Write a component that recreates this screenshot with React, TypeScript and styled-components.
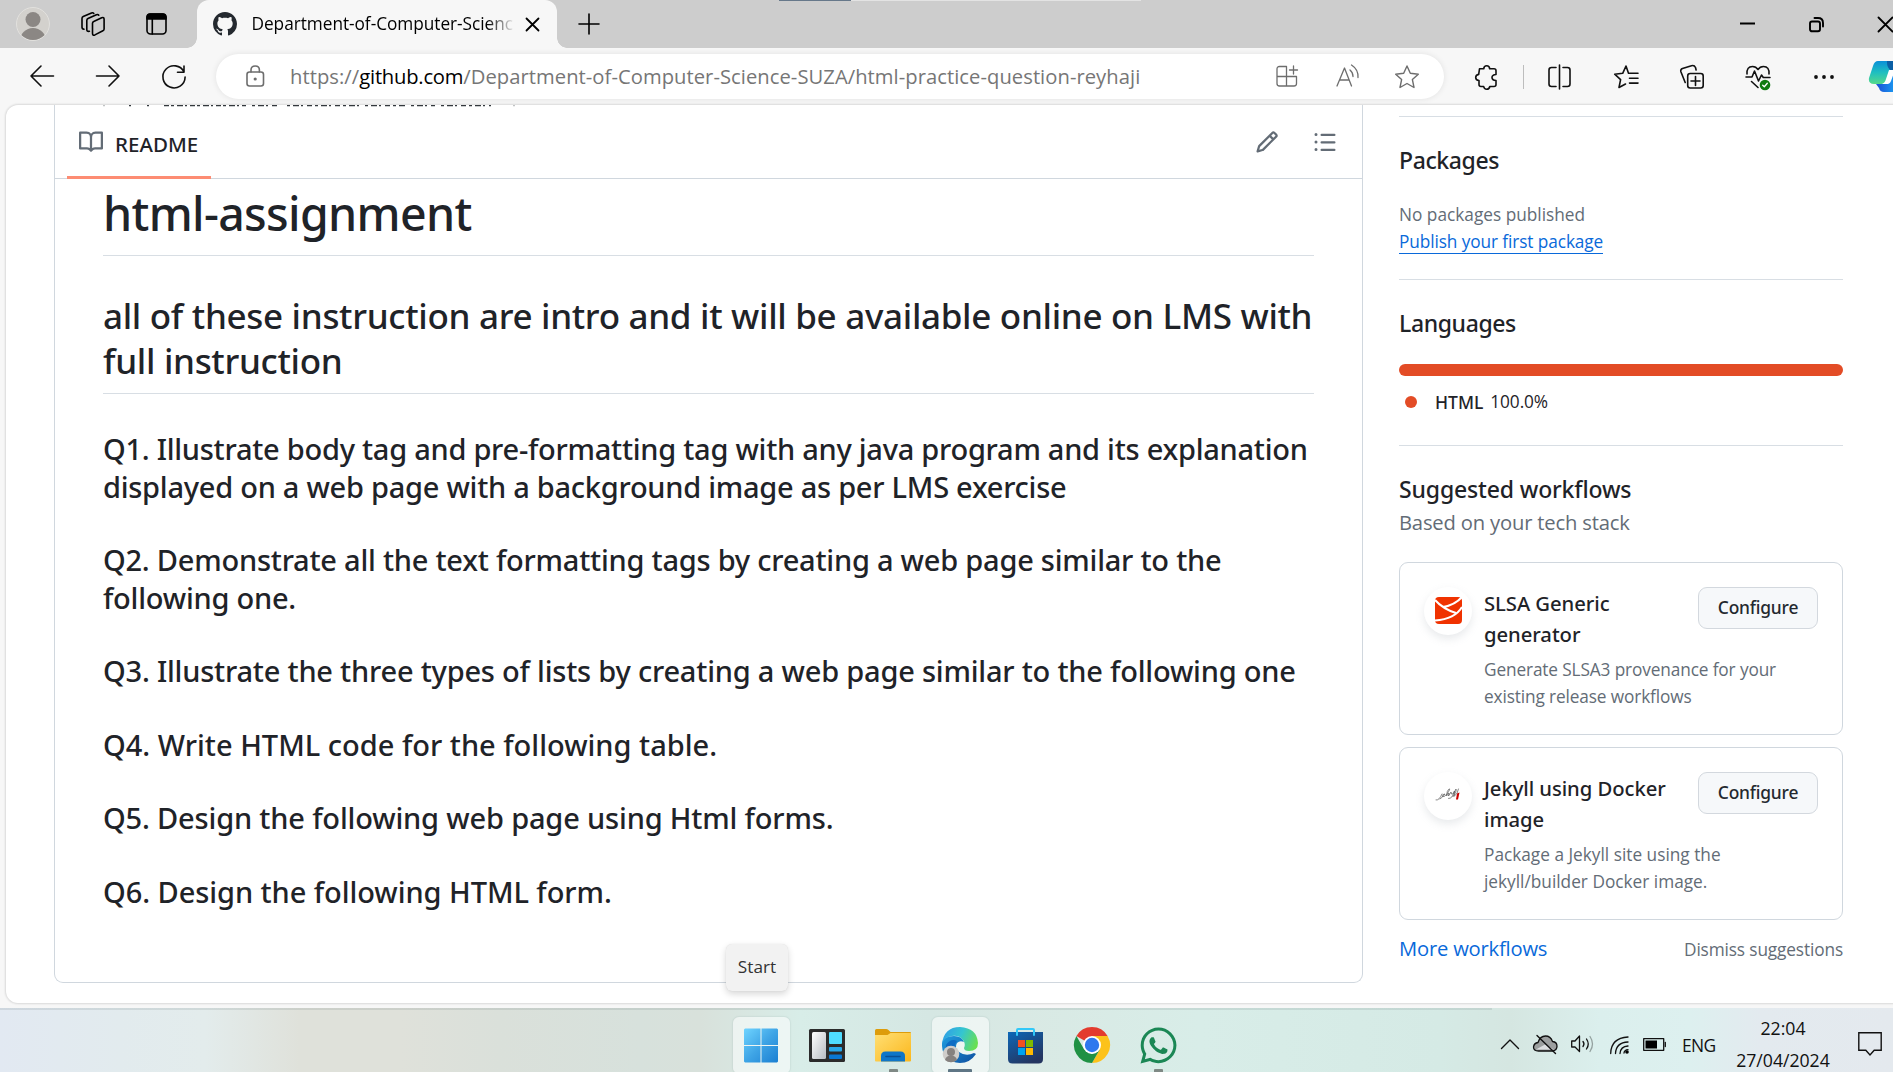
import React from 'react';
import styled, { createGlobalStyle } from 'styled-components';
import { FaWhatsapp } from 'react-icons/fa';

const Global = createGlobalStyle`
  * { box-sizing: border-box; }
  body { margin: 0; overflow: hidden; background: #f7f7f7; }
`;

const regular = '"Open Sans", "Noto Sans", sans-serif';
const semibold = '"Noto Sans", "Open Sans", sans-serif';

const Screen = styled.div`
  position: relative;
  display: flex;
  flex-direction: column;
  width: 1893px;
  height: 1072px;
  overflow: hidden;
  background: #f7f7f7;
  font-family: ${regular};
  color: #1f2328;
  white-space: nowrap;
`;

const Icon = styled.svg<{ $ml?: number; $mt?: number; $sw?: number }>`
  display: block;
  flex: none;
  overflow: visible;
  fill: none;
  stroke: currentColor;
  stroke-width: ${p => p.$sw ?? 1.6};
  stroke-linecap: round;
  stroke-linejoin: round;
  margin-left: ${p => p.$ml ?? 0}px;
  margin-top: ${p => p.$mt ?? 0}px;
`;

const Octicon = styled(Icon)`
  fill: #636c76;
  stroke: none;
`;

/* ---------- tab strip ---------- */

const TabStrip = styled.header`
  display: flex;
  flex: none;
  align-items: center;
  height: 48px;
  padding-left: 16px;
  background: #cdcdcd;
  color: #000;
`;

const CaptureBar = styled.div`
  position: absolute;
  top: 0;
  left: 779px;
  width: 362px;
  height: 1px;
  background: linear-gradient(90deg, #66788a 72px, #e3e3e3 72px);
`;

const Tab = styled.div`
  position: relative;
  display: flex;
  flex: none;
  align-items: center;
  align-self: stretch;
  width: 360px;
  margin-left: 30px;
  padding: 0 17px 0 16px;
  background: #f7f7f7;
  border-radius: 12px 12px 0 0;
  &::before, &::after {
    content: '';
    position: absolute;
    bottom: 0;
    width: 10px;
    height: 10px;
  }
  &::before { left: -10px; background: radial-gradient(circle at 0 0, transparent 9.5px, #f7f7f7 10px); }
  &::after { right: -10px; background: radial-gradient(circle at 100% 0, transparent 9.5px, #f7f7f7 10px); }
`;

const TabTitle = styled.span`
  flex: none;
  width: 264px;
  margin-left: 15px;
  font-size: 17.25px;
  line-height: 32px;
  letter-spacing: -0.04px;
  mask-image: linear-gradient(90deg, #000 235px, transparent 263px);
`;

/* ---------- toolbar ---------- */

const Toolbar = styled.div`
  display: flex;
  flex: none;
  align-items: center;
  height: 57px;
  padding-left: 30px;
  color: #111;
`;

const AddressBar = styled.div`
  display: flex;
  flex: none;
  align-items: center;
  width: 1228px;
  height: 45px;
  margin-left: 30px;
  padding-left: 30px;
  border-radius: 23px;
  background: #fff;
  box-shadow: 0 0 6px rgba(0, 0, 0, 0.09);
  color: #6d6d6d;
`;

const Url = styled.span`
  width: 986px;
  margin-left: 26px;
  font-size: 20.2px;
  line-height: 45px;
  letter-spacing: 0.05px;
  color: #767676;
  b { font-weight: 400; color: #000; letter-spacing: -0.22px; }
`;

const Divider = styled.span`
  flex: none;
  width: 1px;
  height: 24px;
  margin-left: 24px;
  background: #bdbdbd;
`;

/* ---------- page ---------- */

const Page = styled.main`
  display: flex;
  flex: none;
  align-items: flex-start;
  width: 1892px;
  height: 898px;
  margin-left: 6px;
  padding-left: 48px;
  overflow: hidden;
  background: #fff;
  border-radius: 12px 0 0 12px;
  box-shadow: 0 0 2px 1px rgba(0, 0, 0, 0.12);
`;

const Readme = styled.section`
  flex: none;
  width: 1309px;
  height: 878px;
  border: 1px solid #d0d7de;
  border-top: 0;
  border-radius: 0 0 9px 9px;
`;

const ReadmeHeader = styled.div`
  position: relative;
  display: flex;
  height: 74px;
  padding: 0 25px 0 12px;
  border-bottom: 1px solid #d0d7de;
`;

const ScrolledLine = styled.svg`
  position: absolute;
  top: 0;
  left: 0;
  stroke: #33383d;
  stroke-width: 1.4;
  fill: none;
`;

const ReadmeTab = styled.div`
  display: flex;
  width: 144px;
  height: 74px;
  padding-left: 12px;
  border-bottom: 3px solid #fd8c73;
  span {
    margin-left: 12px;
    padding-top: 24px;
    font: 500 20.5px/30px ${semibold};
    letter-spacing: 0.05px;
  }
`;

const HeaderTools = styled.div`
  display: flex;
  align-items: flex-start;
  gap: 34px;
  margin-left: auto;
  padding-top: 25px;
`;

const Article = styled.article`
  padding: 4px 48px 0;
  font-family: ${semibold};
  font-weight: 500;
`;

const H1 = styled.h1`
  margin: 0 0 37px;
  padding-bottom: 12px;
  border-bottom: 1px solid #d8dee4;
  font-size: 46.5px;
  font-weight: 500;
  line-height: 60px;
  letter-spacing: -0.66px;
`;

const H2 = styled.h2`
  margin: 0 0 36px;
  padding-bottom: 10px;
  border-bottom: 1px solid #d8dee4;
  font-size: 35px;
  font-weight: 500;
  line-height: 45px;
  letter-spacing: -0.31px;
`;

const H3 = styled.h3<{ $ls?: number }>`
  margin: 0 0 36px;
  font-size: 29px;
  font-weight: 500;
  line-height: 37.5px;
  letter-spacing: ${p => p.$ls ?? -0.26}px;
`;

/* ---------- sidebar ---------- */

const Sidebar = styled.aside`
  width: 444px;
  margin-left: 36px;
  padding-top: 11px;
`;

const Section = styled.section<{ $h?: number }>`
  height: ${p => (p.$h ? p.$h + 'px' : 'auto')};
  padding-top: 24px;
  border-top: 1px solid #d8dee4;
`;

const SideTitle = styled.h2<{ $ls?: number }>`
  margin: 0;
  font: 500 23px/38px ${semibold};
  letter-spacing: ${p => p.$ls ?? -0.38}px;
`;

const Muted = styled.p<{ $size?: number; $lh?: number; $ls?: number }>`
  margin: 0;
  color: #636c76;
  font-size: ${p => p.$size ?? 17.25}px;
  line-height: ${p => p.$lh ?? 27}px;
  letter-spacing: ${p => p.$ls ?? 0}px;
`;

const PackageText = styled.div`
  padding-top: 22px;
`;

const PackageLink = styled.a`
  display: inline-block;
  height: 26px;
  border-bottom: 1px solid #0969da;
  color: #0969da;
  font-size: 17.25px;
  line-height: 27px;
  letter-spacing: -0.1px;
`;

const LanguageBar = styled.div`
  height: 12px;
  margin-top: 22px;
  border-radius: 6px;
  background: #e34c26;
`;

const LanguageRow = styled.div`
  display: flex;
  align-items: center;
  height: 27px;
  margin-top: 12px;
  padding-left: 6px;
  font-size: 17.25px;
  i { width: 12px; height: 12px; border-radius: 50%; background: #e34c26; }
  b { margin-left: 18px; font: 500 17.5px ${semibold}; }
  span { margin-left: 7px; letter-spacing: -0.1px; }
`;

const Workflows = styled.div`
  padding-top: 25px;
`;

const Card = styled.div`
  display: flex;
  height: 173px;
  margin-bottom: 12px;
  padding: 24px;
  border: 1px solid #d0d7de;
  border-radius: 9px;
`;

const Logo = styled.div`
  display: flex;
  flex: none;
  align-items: center;
  justify-content: center;
  width: 48px;
  height: 48px;
  padding-bottom: 2px;
  border-radius: 50%;
  background: #fff;
  box-shadow: 0 4px 9px rgba(140, 149, 159, 0.2);
`;

const CardBody = styled.div`
  flex: 1;
  margin-left: 12px;
`;

const CardTop = styled.div`
  display: flex;
  align-items: flex-start;
  justify-content: space-between;
`;

const CardTitle = styled.h3`
  margin: 1px 0 6px;
  font: 500 20.25px/31px ${semibold};
  letter-spacing: -0.06px;
`;

const Configure = styled.button`
  width: 120px;
  height: 42px;
  padding: 0 0 2px;
  border: 1px solid #d3d8de;
  border-radius: 9px;
  background: #f6f8fa;
  color: #24292f;
  font: 500 17.4px ${semibold};
  letter-spacing: -0.2px;
`;

const CardFooter = styled.div`
  display: flex;
  align-items: baseline;
  justify-content: space-between;
`;

const MoreLink = styled.a`
  color: #0969da;
  font-size: 20.2px;
  line-height: 32px;
  letter-spacing: -0.2px;
`;

/* ---------- taskbar ---------- */

const Taskbar = styled.footer`
  display: flex;
  flex: none;
  height: 64px;
  margin-top: 5px;
  padding-left: 733px;
  color: #111;
  background:
    linear-gradient(90deg, rgba(60, 80, 80, 0.12) 1492px, transparent 1492px) 0 0 / 100% 2px no-repeat,
    linear-gradient(90deg, #e2e9f2 0, #e2ebee 120px, #e3ecec 205px, #dfe1da 300px, #dfe1da 400px, #dae0da 500px, #d7e1dc 640px, #d8e1db 700px, #d8ede8 800px, #d5e7e3 930px, #d9e9e4 1020px, #d8ede8 1200px, #d5eae5 1440px, #d5e6e1 1510px, #dbefed 1600px, #ddf0ef 1690px, #e3eaef 1760px, #e4e9ee 1893px);
`;

const TaskButton = styled.div<{ $active?: boolean; $run?: number }>`
  position: relative;
  display: flex;
  flex: none;
  justify-content: center;
  width: 57px;
  height: 56px;
  margin: 9px 9.2px 0 0;
  padding: 9.5px 1px 0 0;
  border-radius: 6px 6px 5px 5px;
  background: ${p => (p.$active ? 'rgba(255, 255, 255, 0.55)' : 'transparent')};
  box-shadow: ${p => (p.$active ? '0 0 1px 1px rgba(120, 150, 150, 0.12)' : 'none')};
  &::after {
    content: '';
    position: absolute;
    bottom: 1px;
    left: calc(50% - ${p => (p.$run ?? 0) / 2}px);
    width: ${p => p.$run ?? 0}px;
    height: 3px;
    border-radius: 1px 1px 0 0;
    background: ${p => ((p.$run ?? 0) > 10 ? '#5f7685' : '#7f8985')};
  }
`;

const WhatsApp = styled(FaWhatsapp)`
  margin-top: -2px;
  color: #1b8755;
`;

const Tray = styled.div`
  display: flex;
  align-items: flex-start;
  margin-left: auto;
  padding-right: 11px;
`;

const Lang = styled.span`
  width: 34px;
  margin: 22px 0 0 16px;
  font-size: 17.4px;
  line-height: 30px;
  letter-spacing: -0.6px;
`;

const Clock = styled.div`
  width: 96px;
  margin: 4px 0 0 19px;
  font-size: 17.7px;
  line-height: 32px;
  text-align: center;
  letter-spacing: -0.03px;
`;

const Tooltip = styled.div`
  position: absolute;
  left: 726px;
  top: 944px;
  width: 62px;
  height: 47px;
  border-radius: 6px;
  background: #f2f2f2;
  box-shadow: 0 3px 7px rgba(0, 0, 0, 0.16), 0 0 1px rgba(0, 0, 0, 0.12);
  color: #333;
  font-size: 17.2px;
  line-height: 46px;
  text-align: center;
`;

const book = 'M0 1.75A.75.75 0 0 1 .75 1h4.253c1.227 0 2.317.59 3 1.501A3.743 3.743 0 0 1 11.006 1h4.245a.75.75 0 0 1 .75.75v10.5a.75.75 0 0 1-.75.75h-4.507a2.25 2.25 0 0 0-1.591.659l-.622.621a.75.75 0 0 1-1.06 0l-.622-.621A2.25 2.25 0 0 0 5.258 13H.75a.75.75 0 0 1-.75-.75Zm7.251 10.324.004-5.073-.002-2.253A2.25 2.25 0 0 0 5.003 2.5H1.5v9h3.757a3.75 3.75 0 0 1 1.994.574ZM8.755 4.75l-.004 7.322a3.752 3.752 0 0 1 1.992-.572H14.5v-9h-3.495a2.25 2.25 0 0 0-2.25 2.25Z';
const pencil = 'M11.013 1.427a1.75 1.75 0 0 1 2.474 0l1.086 1.086a1.75 1.75 0 0 1 0 2.474l-8.61 8.61c-.21.21-.47.364-.756.445l-3.251.93a.75.75 0 0 1-.927-.928l.929-3.25c.081-.286.235-.547.445-.758l8.61-8.61Zm.176 4.823L9.75 4.81l-6.286 6.287a.253.253 0 0 0-.064.108l-.558 1.953 1.953-.558a.253.253 0 0 0 .108-.064Zm1.238-3.763a.25.25 0 0 0-.354 0L10.811 3.75l1.439 1.44 1.263-1.263a.25.25 0 0 0 0-.354Z';
const list = 'M5.75 2.5h8.5a.75.75 0 0 1 0 1.5h-8.5a.75.75 0 0 1 0-1.5Zm0 5h8.5a.75.75 0 0 1 0 1.5h-8.5a.75.75 0 0 1 0-1.5Zm0 5h8.5a.75.75 0 0 1 0 1.5h-8.5a.75.75 0 0 1 0-1.5ZM2 14a1 1 0 1 1 0-2 1 1 0 0 1 0 2Zm1-6a1 1 0 1 1-2 0 1 1 0 0 1 2 0ZM2 4a1 1 0 1 1 0-2 1 1 0 0 1 0 2Z';
const octocat = 'M8 0c4.42 0 8 3.58 8 8a8.013 8.013 0 0 1-5.45 7.59c-.4.08-.55-.17-.55-.38 0-.27.01-1.13.01-2.2 0-.75-.25-1.23-.54-1.48 1.78-.2 3.65-.88 3.65-3.95 0-.88-.31-1.59-.82-2.15.08-.2.36-1.02-.08-2.12 0 0-.67-.22-2.2.82-.64-.18-1.32-.27-2-.27-.68 0-1.36.09-2 .27-1.53-1.03-2.2-.82-2.2-.82-.44 1.1-.16 1.92-.08 2.12-.51.56-.82 1.28-.82 2.15 0 3.06 1.86 3.75 3.64 3.95-.23.2-.44.55-.51 1.07-.46.21-1.61.55-2.33-.66-.15-.24-.6-.83-1.23-.82-.67.01-.27.38.01.53.34.19.73.9.82 1.13.16.45.68 1.31 2.69.94 0 .67.01 1.3.01 1.49 0 .21-.15.45-.55.38A7.995 7.995 0 0 1 0 8c0-4.42 3.58-8 8-8Z';

const Workflow = ({ logo, title, text, ls }: { logo: React.ReactNode; title: React.ReactNode; text: React.ReactNode; ls?: number }) => (
  <Card>
    <Logo>{logo}</Logo>
    <CardBody>
      <CardTop>
        <CardTitle>{title}</CardTitle>
        <Configure>Configure</Configure>
      </CardTop>
      <Muted $ls={ls}>{text}</Muted>
    </CardBody>
  </Card>
);

const TabStripView = () => (
  <TabStrip>
    <Icon width="34" height="34" viewBox="0 0 34 34">
      <clipPath id="face"><circle cx="17" cy="17" r="16" /></clipPath>
      <circle cx="17" cy="17" r="16.5" fill="#d3d1cd" stroke="#e2e1de" strokeWidth="1" />
      <g clipPath="url(#face)" fill="#8b8784" stroke="none">
        <circle cx="17" cy="12.5" r="7.5" />
        <circle cx="17" cy="34" r="13" />
      </g>
    </Icon>
    <Icon $ml={31} width="24" height="24" viewBox="0 0 24 24">
      <path d="M11.5 11.2q0-1.3 1.2-1.8l8-3.6q2.4-.9 2.4 1.5v9.7q0 1.3-1.2 1.8l-8 4.1q-2.4 1-2.4-1.6z" />
      <path d="M8.4 19.3q-2.6.6-2.6-1.9V8.4q0-1.3 1.2-1.9l8.4-3.8q1.6-.6 2.4.5" />
      <path d="M3 17.2q-2-.2-2-2V6.4q0-1.3 1.2-1.8L10.5 1q1.5-.6 2.3.4" />
    </Icon>
    <Icon $ml={40.5} width="21" height="22" viewBox="0 0 21 22">
      <rect x="1" y="1" width="19" height="20" rx="3.5" />
      <path d="M1 6V4q0-3 3-3h13q3 0 3 3v2z" fill="#000" />
      <path d="M6.3 6v15" />
    </Icon>
    <Tab>
      <Octicon width="24" height="24" viewBox="0 0 16 16"><path d={octocat} fill="#24292f" /></Octicon>
      <TabTitle>Department-of-Computer-Scienc</TabTitle>
      <Icon $ml={10.500} $mt={1} $sw={1.8} width="13" height="13" viewBox="0 0 13 13"><path d="M.5.5l12 12M12.5.5l-12 12" /></Icon>
    </Tab>
    <Icon $ml={22} width="20" height="20" viewBox="0 0 20 20"><path d="M0 10h20M10 0v20" /></Icon>
    <Icon $ml={1141} $mt={-1} $sw={2} width="15" height="15" viewBox="0 0 15 15"><path d="M0 7.5h15" strokeLinecap="butt" /></Icon>
    <Icon $ml={54} $sw={1.9} width="15" height="15" viewBox="0 0 15 15">
      <rect x="1" y="4.5" width="10" height="9.8" rx="2" />
      <path d="M5.5 1h3.5q5 0 5 5v3.500" />
    </Icon>
    <Icon $ml={54} $sw={1.8} width="15" height="15" viewBox="0 0 15 15"><path d="M.5.5l14 14M14.5.5l-14 14" /></Icon>
  </TabStrip>
);

const ToolbarView = () => (
  <Toolbar>
    <Icon $mt={-1} width="24" height="22" viewBox="0 0 24 22"><path d="M23.5 11H1M11 1L1 11l10 10" /></Icon>
    <Icon $ml={42} $mt={-1} width="24" height="22" viewBox="0 0 24 22"><path d="M.5 11H23M13 1l10 10-10 10" /></Icon>
    <Icon $ml={42} width="24" height="24" viewBox="0 0 24 24"><path d="M22 7A11.1 11.1 0 1 0 23.100 12M22 1v6.200h-6.500" /></Icon>
    <AddressBar>
      <Icon $mt={-1} width="18" height="22" viewBox="0 0 18 22">
        <rect x="1" y="7" width="16.5" height="14" rx="2.5" />
        <path d="M5 7V5q0-4 4.200-4t4.200 4v2" />
        <circle cx="9.200" cy="14" r=".8" fill="currentColor" />
      </Icon>
      <Url>https://<b>github.com</b>/Department-of-Computer-Science-SUZA/html-practice-question-reyhaji</Url>
      <Icon $sw={1.3} $mt={-1} width="22" height="22" viewBox="0 0 22 22">
        <path d="M10.5 11.500V1.500h-7q-2.500 0-2.500 2.500v14.500q0 2.500 2.500 2.500h14.500q2.500 0 2.500-2.500v-7H1M10.500 11.500V21M17.500 1v8M13.500 5h8" />
      </Icon>
      <Icon $ml={38} $sw={1.3} $mt={-1} width="24" height="22" viewBox="0 0 24 22">
        <path d="M1 21L8.5 3l7 18M3.700 15h9.500M14 5q3 2.500 3 6.500M15.500 0Q22.500 4.500 22 12.500" />
      </Icon>
      <Icon $ml={35} $sw={1.4} width="24" height="24" viewBox="0 0 24 24">
        <path d="M12 1l3.300 7.300 8 .9-5.900 5.400 1.600 7.900L12 18.500l-7 4 1.600-7.900L.7 9.200l8-.9z" />
      </Icon>
    </AddressBar>
    <Icon $ml={31} width="24" height="24" viewBox="0 0 24 24">
      <path d="M4.500 3.800h4.200q.3-3 3-3t3 3h4.300q2 0 2 2v3.700q-4 .3-4 3t4 3v4q0 2-2 2h-4.200q-.5 2.700-3.100 2.700t-3-2.700H6q-2 0-2-2v-4q-3.300-.3-3.300-3t3-3.100z" />
    </Icon>
    <Divider />
    <Icon $ml={24} width="23" height="24" viewBox="0 0 23 24"><path d="M8 2.500H3.500Q1 2.500 1 5v14q0 2.500 2.500 2.500H8M15 2.500h4.500Q22 2.500 22 5v14q0 2.500-2.500 2.500H15M11.500 0v24" /></Icon>
    <Icon $ml={43} width="24" height="24" viewBox="0 0 24 24">
      <path d="M14.500 8.300L12 1 8.700 8.300l-8 .9 5.900 5.400L5 22.500l6.500-3.500M15.500 8.300H24M15.500 13.200H24M15.500 18.100H24" />
    </Icon>
    <Icon $ml={42} width="24" height="24" viewBox="0 0 24 24">
      <rect x="7.700" y="8.500" width="15.500" height="14.500" rx="2.500" />
      <path d="M15.500 11.500v9M11 16h9M5.200 17.500L.8 6.500Q.4 4.200 2.500 3.500l9-2.800q2.800-.8 4 1.800l.6 2.500" />
    </Icon>
    <Icon $ml={42} width="24" height="24" viewBox="0 0 24 24">
      <path d="M1 9Q.5 1.500 6.500 1.500 10 1.500 12 4.500 14 1.500 17.500 1.500 23.500 1.500 23 9M0 12h6l2.500-6 4 10 3-6 1.800 2.500H24M5.500 16.500L12 22.500" />
      <circle cx="19" cy="20" r="5.300" fill="#107c10" stroke="none" />
      <path d="M16.700 20.200l1.600 1.500 3-3.400" stroke="#fff" strokeWidth="1.300" />
    </Icon>
    <Icon $ml={44} width="20" height="6" viewBox="0 0 20 6">
      <g fill="#111" stroke="none"><circle cx="2" cy="3" r="1.900" /><circle cx="10" cy="3" r="1.900" /><circle cx="18" cy="3" r="1.900" /></g>
    </Icon>
    <Icon $ml={35} width="40" height="32" viewBox="0 0 40 32">
      <defs>
        <linearGradient id="cp1" x1="0" y1="0" x2="0" y2="1"><stop offset="0" stopColor="#0a8fd8" /><stop offset=".5" stopColor="#1fbfc0" /><stop offset="1" stopColor="#56d98a" /></linearGradient>
        <linearGradient id="cp2" x1="0" y1="0" x2="1" y2="0"><stop offset="0" stopColor="#1b4fd6" /><stop offset=".7" stopColor="#1aa7f5" /></linearGradient>
      </defs>
      <g stroke="none">
        <path d="M7 23h12l6-13h14v21H15q-4 0-5-4z" fill="url(#cp2)" />
        <path d="M9 0h16q3 0 4.500 5l2 5h-8q-3 0-4.500 5l-2 5q-1 3-4 3H5q-6 0-5-6L4 5q1.500-5 5-5z" fill="url(#cp1)" />
        <path d="M18 0h7q3 0 4.500 5l2 5h-9q-5-3-4.500-10z" fill="#0b5fa5" />
        <path d="M20 9h6l-4 11q-1 3-4 3h-5q3-1 4-5z" fill="#fff" />
      </g>
    </Icon>
  </Toolbar>
);

const TaskbarView = () => (
  <Taskbar>
    <TaskButton $active>
      <Icon width="36" height="37" viewBox="0 0 36 36">
        <defs>
          <linearGradient id="win" x1="0" y1="0" x2="1" y2="1"><stop offset="0" stopColor="#6fd4ff" /><stop offset=".5" stopColor="#3fa5e6" /><stop offset="1" stopColor="#1b7fd2" /></linearGradient>
        </defs>
        <path d="M2 1h15.500v16.500H1V2zM18.500 1H34l1 1v15.500H18.500zM1 18.500h16.500V35H2l-1-1zM18.500 18.500H35V34l-1 1H18.500z" fill="url(#win)" stroke="none" />
      </Icon>
    </TaskButton>
    <TaskButton>
      <Icon width="36" height="37" viewBox="0 0 36 37">
        <defs><linearGradient id="pane" x1="0" y1="0" x2="1" y2="1"><stop offset="0" stopColor="#fff" /><stop offset="1" stopColor="#b9bcc2" /></linearGradient></defs>
        <g stroke="none">
          <rect y="2" width="36" height="33" rx="1.500" fill="#2b2b2b" />
          <rect x="3" y="5" width="14" height="27" rx="1.500" fill="url(#pane)" />
          <rect x="20" y="5" width="13" height="12" rx="1" fill="#4fdcff" />
          <rect x="20" y="20" width="13" height="4.500" rx="1" fill="#28a8ea" />
          <rect x="20" y="27.500" width="13" height="4.500" rx="1" fill="#0a78d4" />
        </g>
      </Icon>
    </TaskButton>
    <TaskButton $run={9}>
      <Icon width="36" height="37" viewBox="0 0 36 37">
        <defs><linearGradient id="dir" x1="0" y1="0" x2="1" y2="1"><stop offset="0" stopColor="#ffdf74" /><stop offset="1" stopColor="#fbb71c" /></linearGradient></defs>
        <g stroke="none">
          <path d="M0 3.500Q0 2 1.500 2H11q1.500 0 2.500 1L15.500 5H35q1 0 1 1v6H0z" fill="#dd9c0b" />
          <path d="M0 8h12.500l3-2H36v27.500q0 1-1 1H1q-1 0-1-1z" fill="url(#dir)" />
          <path d="M6 34.500V29q0-4.500 4.500-4.500h15Q30 24.500 30 29v5.500z" fill="#0f76c8" />
          <path d="M11 29.500h14" stroke="#0a4f94" strokeWidth="1.600" />
        </g>
      </Icon>
    </TaskButton>
    <TaskButton $active $run={24}>
      <Icon width="36" height="36" viewBox="0 0 36 36">
        <defs>
          <linearGradient id="e1" x1="0" y1=".3" x2="1" y2=".6"><stop offset="0" stopColor="#2f9fe6" /><stop offset=".5" stopColor="#35c5d0" /><stop offset="1" stopColor="#69e04f" /></linearGradient>
          <linearGradient id="e2" x1="0" y1="0" x2="1" y2="1"><stop offset="0" stopColor="#1f9de0" /><stop offset="1" stopColor="#0f4fa0" /></linearGradient>
        </defs>
        <g stroke="none">
          <path d="M0 16Q1 9 12 9q8 0 10 6-4-2-7 1-3 5 2 9 7 5 15 1l2 1Q28 36 18 36 1 35 0 19z" fill="url(#e2)" />
          <path d="M0 17Q2 0 18 0q17 1 18 16 0 8-9 8-5 0-5-3 2-4-1-8-4-5-11-4Q2 10 0 17z" fill="url(#e1)" />
          <path d="M4 18q5-7 11-4-4 5-1 11l-9 3z" fill="#0d6cc4" />
          <circle cx="9" cy="27" r="8.300" fill="#cfcdca" />
          <circle cx="9" cy="25" r="4" fill="#85817f" />
          <path d="M3 33q1-4.500 6-4.500t6 4.500q-2.500 2.300-6 2.300T3 33z" fill="#85817f" />
        </g>
      </Icon>
    </TaskButton>
    <TaskButton>
      <Icon width="35" height="37" viewBox="0 0 35 37">
        <defs><linearGradient id="bag" x1="0" y1="0" x2=".6" y2="1"><stop offset="0" stopColor="#0d68b8" /><stop offset="1" stopColor="#243560" /></linearGradient></defs>
        <g stroke="none">
          <path d="M0 5h35v27q0 4.500-4.500 4.500h-26Q0 36.500 0 32z" fill="url(#bag)" />
          <path d="M9 8V3q0-1 1-1h15q1 0 1 1v5" fill="none" stroke="#32c8f8" strokeWidth="2" />
          <path d="M10 13h7v7h-7z" fill="#f25022" /><path d="M18 13h7v7h-7z" fill="#7fba00" />
          <path d="M10 21h7v7h-7z" fill="#00a4ef" /><path d="M18 21h7v7h-7z" fill="#ffb900" />
        </g>
      </Icon>
    </TaskButton>
    <TaskButton>
      <Icon width="36" height="36" viewBox="0 0 36 36">
        <g stroke="none">
          <path d="M18 18L2.400 9A18 18 0 0 1 33.600 9z" fill="#e33b2e" />
          <path d="M18 9h15.600A18 18 0 0 1 18 36l7.800-13.500z" fill="#fcc21b" />
          <path d="M18 36A18 18 0 0 1 2.400 9l7.800 13.500L18 27l7.800-4.500z" fill="#209144" />
          <circle cx="18" cy="18" r="9" fill="#fff" />
          <circle cx="18" cy="18" r="7.200" fill="#2f78ee" />
        </g>
      </Icon>
    </TaskButton>
    <TaskButton $run={9}>
      <WhatsApp size={41} />
    </TaskButton>
    <Tray>
      <Icon $mt={31} $sw={1.4} width="18" height="10" viewBox="0 0 18 10"><path d="M.5 9.500L9 1l8.500 8.500" /></Icon>
      <Icon $ml={14} $mt={27} width="25" height="20" viewBox="0 0 25 20">
        <path d="M5.500 16q-5 0-5-4 .5-4 4.500-4.500Q7 1 12.500 1q5 0 7 5.500 4.500.5 4.500 4.700T19.500 16z" fill="#9c9f9f" strokeWidth="1.300" />
        <path d="M3 14.500l9-5 9 5z" fill="#dcdedf" stroke="none" />
        <path d="M4 .5L22.500 18.500" strokeWidth="1.400" />
      </Icon>
      <Icon $ml={13} $mt={27} width="22" height="18" viewBox="0 0 22 18">
        <path d="M.7 6v6H4l4.500 4.500V1L4 6z" strokeWidth="1.300" />
        <path d="M12 6.500q2 2.500 0 5M15.500 4q3.500 5 0 10" strokeWidth="1.300" />
        <path d="M19 1.500q5 7.500 0 15" strokeWidth="1.300" opacity=".35" />
      </Icon>
      <Icon $ml={17} $mt={28} width="19" height="18" viewBox="0 0 19 18">
        <path d="M.7 17.500Q1 2 18 1M5.500 17.500Q6 6.500 18 6M10 17.500q.5-7 8-7.500M14 17q.4-3 4-3.300" strokeWidth="1.300" />
        <circle cx="17" cy="16" r="1.800" fill="#000" stroke="none" />
      </Icon>
      <Icon $ml={14} $mt={30} width="23" height="13" viewBox="0 0 23 13">
        <rect x=".7" y=".7" width="20" height="11.600" strokeWidth="1.300" />
        <path d="M2.500 2.500H14v8H2.500z" fill="#000" stroke="none" /><path d="M22.300 4.500v4" strokeWidth="1.300" />
      </Icon>
      <Lang>ENG</Lang>
      <Clock>22:04<br />27/04/2024</Clock>
      <Icon $ml={27} $mt={24} width="24" height="24" viewBox="0 0 24 24"><path d="M.8.8h22.400v17.500h-7L12 23l-4.200-4.700h-7z" strokeWidth="1.400" strokeLinejoin="miter" /></Icon>
    </Tray>
  </Taskbar>
);

export default function App() {
  return (
    <Screen>
      <Global />
      <TabStripView />
      <CaptureBar />
      <ToolbarView />
      <Page>
        <Readme>
          <ReadmeHeader>
            <ScrolledLine width="480" height="2" viewBox="0 0 480 2">
              <path d="M74 .5h2M92 .5h2" />
              <path d="M109 .5H191" strokeDasharray="5 2 3 3 6 2 2 3" />
              <path d="M197 .5H224M232 .5H304M310 .5H350M356 .5H380M386 .5H436" strokeDasharray="3 3 6 2 2 4 5 3" />
              <path d="M48 .5h2M458 .5h2" opacity=".3" />
            </ScrolledLine>
            <ReadmeTab>
              <Octicon $mt={25} width="24" height="24" viewBox="0 0 16 16"><path d={book} /></Octicon>
              <span>README</span>
            </ReadmeTab>
            <HeaderTools>
              <Octicon width="24" height="24" viewBox="0 0 16 16"><path d={pencil} /></Octicon>
              <Octicon width="24" height="24" viewBox="0 0 16 16"><path d={list} /></Octicon>
            </HeaderTools>
          </ReadmeHeader>
          <Article>
            <H1>html-assignment</H1>
            <H2>all of these instruction are intro and it will be available online on LMS with<br />full instruction</H2>
            <H3>Q1. Illustrate body tag and pre-formatting tag with any java program and its explanation<br />displayed on a web page with a background image as per LMS exercise</H3>
            <H3 $ls={-0.23}>Q2. Demonstrate all the text formatting tags by creating a web page similar to the<br />following one.</H3>
            <H3 $ls={-0.21}>Q3. Illustrate the three types of lists by creating a web page similar to the following one</H3>
            <H3 $ls={0}>Q4. Write HTML code for the following table.</H3>
            <H3 $ls={-0.17}>Q5. Design the following web page using Html forms.</H3>
            <H3 $ls={-0.06}>Q6. Design the following HTML form.</H3>
          </Article>
        </Readme>
        <Sidebar>
          <Section $h={163}>
            <SideTitle>Packages</SideTitle>
            <PackageText>
              <Muted>No packages published</Muted>
              <PackageLink>Publish your first package</PackageLink>
            </PackageText>
          </Section>
          <Section $h={166}>
            <SideTitle>Languages</SideTitle>
            <LanguageBar />
            <LanguageRow><i /><b>HTML</b><span>100.0%</span></LanguageRow>
          </Section>
          <Section>
            <SideTitle $ls={-0.15}>Suggested workflows</SideTitle>
            <Muted $size={20.2} $lh={29} $ls={-0.17}>Based on your tech stack</Muted>
            <Workflows>
              <Workflow
                ls={-0.13}
                logo={
                  <Icon width="27" height="27" viewBox="0 0 27 27">
                    <rect width="27" height="27" rx="4" fill="#f03200" stroke="none" />
                    <path d="M0 3q8 9 21 13M27 0Q20 8 8 10M27 10Q20 22 0 23.500" stroke="#fff" strokeWidth="2" strokeLinecap="butt" />
                  </Icon>
                }
                title={<>SLSA Generic<br />generator</>}
                text={<>Generate SLSA3 provenance for your<br />existing release workflows</>}
              />
              <Workflow
                logo={
                  <Icon width="27" height="14" viewBox="0 0 27 14">
                    <path d="M1 12q3 1 6-6M5 11q3-2 5-5-3 0-2.500 2.500 1.500 1 4.500-2.500 4-6 2-5-2 1-2.500 7l2.500-3-.5 3 2.500-4q0 3 2 2l1.500-3q-2 8-6 7.500M18 8.500q4-5 3-7.500-2 2-2 7.500 4-3 4.500-7.500" stroke="#555" strokeWidth=".7" />
                    <path d="M22 5.500l2.500-1-1.500 7h-2z" fill="#c00" stroke="none" />
                  </Icon>
                }
                title={<>Jekyll using Docker<br />image</>}
                text={<>Package a Jekyll site using the<br />jekyll/builder Docker image.</>}
              />
            </Workflows>
            <CardFooter>
              <MoreLink>More workflows</MoreLink>
              <Muted $ls={-0.13}>Dismiss suggestions</Muted>
            </CardFooter>
          </Section>
        </Sidebar>
      </Page>
      <TaskbarView />
      <Tooltip>Start</Tooltip>
    </Screen>
  );
}
